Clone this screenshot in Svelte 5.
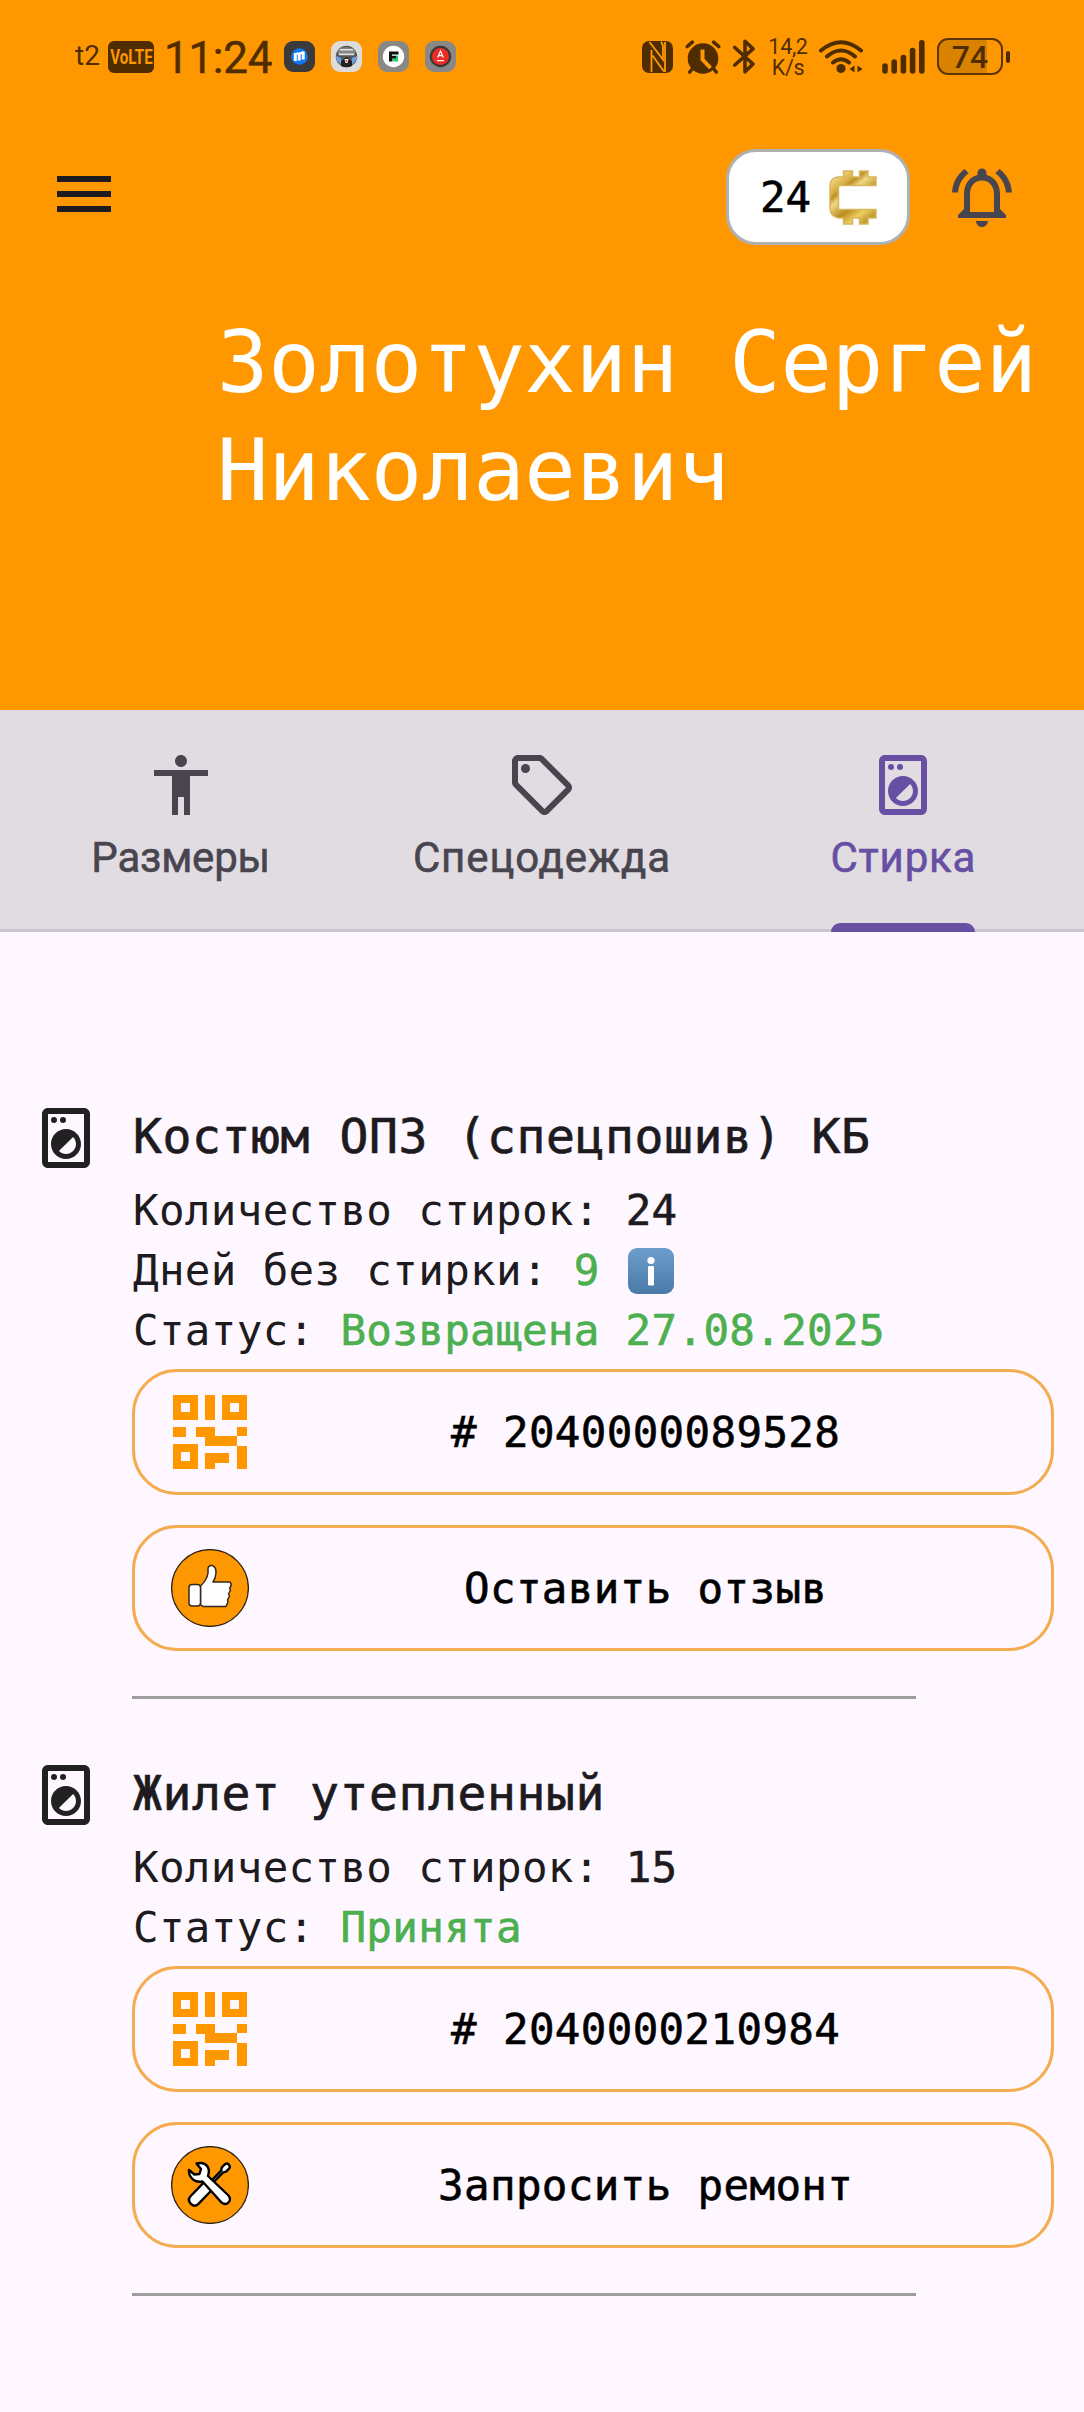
<script>
  const tabs = [
    { label: 'Размеры', icon: 'person', cls: 'sizes' },
    { label: 'Спецодежда', icon: 'tag', cls: 'wear' },
    { label: 'Стирка', icon: 'laundry', cls: 'wash', active: true }
  ];
  const items = [
    {
      title: 'Костюм ОПЗ (спецпошив) КБ',
      washes: 24,
      days: 9,
      status: 'Возвращена 27.08.2025',
      code: '2040000089528',
      action: 'Оставить отзыв',
      icon: 'like'
    },
    {
      title: 'Жилет утепленный',
      washes: 15,
      status: 'Принята',
      code: '2040000210984',
      action: 'Запросить ремонт',
      icon: 'tools'
    }
  ];
</script>

{#snippet laundry()}
  <svg class="icon" viewBox="0 0 24 24">
    <path d="M18 2.01L6 2c-1.11 0-2 .89-2 2v16c0 1.11.89 2 2 2h12c1.11 0 2-.89 2-2V4c0-1.11-.89-1.99-2-1.99zM18 20H6V4h12v16z" />
    <circle cx="8" cy="6" r="1" /><circle cx="11" cy="6" r="1" />
    <path d="M12 19c2.76 0 5-2.24 5-5s-2.24-5-5-5-5 2.24-5 5 2.24 5 5 5zm2.36-7.36c1.3 1.3 1.3 3.42 0 4.72-1.3 1.3-3.42 1.3-4.72 0l4.72-4.72z" />
  </svg>
{/snippet}

<div class="screen">
  <header>
    <div class="status">
      <span class="carrier">t2</span>
      <span class="volte"><span>VoLTE</span></span>
      <span class="clock">11:24</span>
      <svg class="app" viewBox="0 0 31 31">
        <rect width="31" height="31" rx="9" fill="#3a3a3a" />
        <circle cx="15.5" cy="15.5" r="8.3" fill="#0d78f2" />
        <path d="M11.3 12v8M15.2 11.5v8M19.2 10.5v8" stroke="#fff" stroke-width="3" />
        <path d="M11 12.500l3-1.500v3zM15 12l4-2v4z" fill="#fff" />
      </svg>
      <svg class="app" viewBox="0 0 31 31">
        <rect width="31" height="31" rx="9" fill="#dedcda" />
        <circle cx="15.5" cy="15.5" r="10.7" fill="#555" />
        <path d="M7 8.5Q15 4 24 8.5V14H7z" fill="#858585" />
        <path d="M9 8.7h13M8 13.4h15" stroke="#e0e0e0" stroke-width="1.6" />
        <path d="M5 15l5 2 2 7.5Q4.5 21 5 15zM26 15l-5 2-2 7.5Q26.5 21 26 15z" fill="#6f9fe0" />
        <path d="M10 20l5.5-4 5.5 4v5q-5.5 2.5-11 0z" fill="#222" />
        <path d="M13.5 18h4l-1 4h-2z" fill="#fff" /><rect x="14.7" y="19" width="1.6" height="2" fill="#e0542c" />
      </svg>
      <svg class="app" viewBox="0 0 31 31">
        <rect width="31" height="31" rx="9" fill="#898886" />
        <circle cx="15.5" cy="15.5" r="10.7" fill="#fff" />
        <path d="M14 14.5h6v6h-4.500z" fill="#1fce6b" />
        <path d="M11 20.5v-10h9.500v2.900H14v1.600h4v2.300h-3.500v3.200z" fill="#111" />
      </svg>
      <svg class="app" viewBox="0 0 31 31">
        <rect width="31" height="31" rx="9" fill="#898886" />
        <circle cx="15.5" cy="15.5" r="10.7" fill="#3c3836" />
        <circle cx="15.5" cy="15.5" r="8.5" fill="#ea2e26" />
        <path d="M12.7 16.5l2.800-6.500 2.800 6.500M13.5 14.700h4M12 19.700h7" stroke="#fff" stroke-width="1.200" fill="none" />
      </svg>

      <svg class="nfc" viewBox="0 0 31 32">
        <rect width="31" height="32" rx="7" fill="#4f2d00" />
        <path d="M7.5 1L21 18.500V6Q21 3 19 1M9.500 9V31M10.500 14.500L22 30.500M23 1V31" fill="none" stroke="#ff9800" stroke-width="1.800" />
      </svg>
      <svg class="alarm" viewBox="0 0 36 34">
        <g stroke="#4f2d00" stroke-width="3.6" stroke-linecap="round">
          <path d="M2.300 6.500l5-4.300M33.700 6.500l-5-4.300M8 28l-3.200 4M28 28l3.200 4" />
        </g>
        <circle cx="18" cy="18.5" r="15.3" fill="#4f2d00" />
        <path d="M17.5 9.500v10l8 8.500" fill="none" stroke="#ff9800" stroke-width="4" />
      </svg>
      <svg class="bt" viewBox="0 0 22 35">
        <path d="M1.800 8.500L20 25l-8 7.800V2.200L20 9.800 1.800 26" fill="none" stroke="#4f2d00" stroke-width="3.6" stroke-linecap="round" stroke-linejoin="round" />
      </svg>
      <span class="speed"><span>14,2</span><span>K/s</span></span>
      <svg class="wifi" viewBox="0 0 44 34">
        <g fill="none" stroke="#4f2d00" stroke-width="4" stroke-linecap="round">
          <path d="M2 10.500Q22-6 42 10.500M8 16.500Q22 4.500 36 16.500M14 22.500q8-6.500 16 0" />
        </g>
        <circle cx="22" cy="28.500" r="4.600" fill="#4f2d00" />
        <path d="M35.500 25.500v7l-5-3.500zM38.500 25.500v7l5-3.500z" fill="#4f2d00" />
      </svg>
      <svg class="signal" viewBox="0 0 43 34">
        <path d="M3 26v5M12.200 22v9M21.400 17.500V31M30.600 10.500V31M39.800 2.800V31" stroke="#4f2d00" stroke-width="5.600" stroke-linecap="round" />
      </svg>
      <span class="battery"><span>74</span></span>
      <span class="nub"></span>
    </div>

    <div class="bar">
      <svg class="icon menu" viewBox="0 0 24 24"><path d="M3 18h18v-2H3v2zm0-5h18v-2H3v2zm0-7v2h18V6H3z" /></svg>
      <div class="coins">
        <span>24</span>
        <svg class="coin" viewBox="0 0 48 55">
          <defs>
            <linearGradient id="gold" x1="0" y1="0" x2="0.7" y2="1">
              <stop offset="0" stop-color="#e0b84a" /><stop offset=".15" stop-color="#efd27a" />
              <stop offset=".3" stop-color="#d9ae45" /><stop offset=".36" stop-color="#c08f2a" />
              <stop offset=".46" stop-color="#f0d885" /><stop offset=".68" stop-color="#b98a1e" />
              <stop offset=".85" stop-color="#ecd05c" /><stop offset="1" stop-color="#c49a35" />
            </linearGradient>
          </defs>
          <path d="M14.500 1h9v6h7V1h8.500v6h8v8.500H9.500v24H47v8.500h-8v6h-8.500v-6h-7v6h-9v-6H9Q1 46 1 38V16Q1 8 9 7h5.500z" fill="url(#gold)" stroke="#d8b75c" stroke-width="1.500" />
        </svg>
      </div>
      <svg class="icon bell" viewBox="0 0 24 24">
        <path d="M12 22c1.100 0 2-.9 2-2h-4c0 1.100.9 2 2 2zm6-6v-5c0-3.070-1.630-5.640-4.500-6.320V4c0-.83-.67-1.500-1.500-1.500s-1.500.67-1.500 1.500v.68C7.640 5.360 6 7.920 6 11v5l-2 2v1h16v-1l-2-2zm-2 1H8v-6c0-2.480 1.510-4.500 4-4.500s4 2.020 4 4.500v6zM7.580 4.080L6.150 2.650C3.750 4.480 2.170 7.300 2.030 10.500h2c.15-2.650 1.510-4.970 3.550-6.420zm12.390 6.420h2c-.15-3.200-1.730-6.020-4.120-7.850l-1.420 1.430c2.020 1.450 3.390 3.770 3.540 6.420z" />
      </svg>
    </div>

    <h1>Золотухин Сергей<br />Николаевич</h1>
  </header>

  <nav>
    {#each tabs as tab}
      <div class="tab {tab.cls}" class:active={tab.active}>
        {#if tab.icon === 'person'}
          <svg class="icon" viewBox="0 0 24 24"><path d="M12 2c1.100 0 2 .9 2 2s-.9 2-2 2-2-.9-2-2 .9-2 2-2zm9 7h-6v13h-2v-6h-2v6H9V9H3V7h18v2z" /></svg>
        {:else if tab.icon === 'tag'}
          <svg class="icon" viewBox="0 0 24 24">
            <path d="M21.410 11.410l-8.830-8.830c-.37-.37-.88-.58-1.410-.58H4c-1.100 0-2 .9-2 2v7.170c0 .53.21 1.040.59 1.410l8.830 8.830c.78.78 2.050.78 2.830 0l7.170-7.170c.78-.78.78-2.040-.01-2.830zM12.830 20L4 11.170V4h7.170L20 12.830 12.830 20z" />
            <circle cx="6.5" cy="6.5" r="1.5" />
          </svg>
        {:else}
          {@render laundry()}
        {/if}
        <span class="label">{tab.label}</span>
        {#if tab.active}<span class="indicator"></span>{/if}
      </div>
    {/each}
  </nav>

  <main>
    {#each items as item}
      <section>
        {@render laundry()}
        <div class="body">
          <h2>{item.title}</h2>
          <div class="lines">
            <p>Количество стирок: <b>{item.washes}</b></p>
            {#if item.days}
              <p>
                Дней без стирки: <b class="ok">{item.days}</b>
                <svg class="info" viewBox="0 0 46 46">
                  <defs>
                    <linearGradient id="blue" x1="0" y1="0" x2="0" y2="1">
                      <stop offset="0" stop-color="#6d9dcb" /><stop offset="1" stop-color="#4b7aa8" />
                    </linearGradient>
                  </defs>
                  <rect width="46" height="46" rx="9" fill="url(#blue)" />
                  <circle cx="23" cy="12.5" r="3.6" fill="#fff" />
                  <rect x="20" y="18" width="6" height="19.5" rx="1.3" fill="#fff" />
                </svg>
              </p>
            {/if}
            <p>Статус: <b class="ok">{item.status}</b></p>
          </div>
          <div class="button">
            <svg class="pic" viewBox="0 0 78 78">
              <g fill="none" stroke="#ff9800" stroke-width="8">
                <path d="M6 6h17v17H6zM55 6h17v17H55zM6 55h17v17H6z" />
              </g>
              <path fill="#ff9800" d="M34 2h10v25H34zM2 34h13v10H2zM25 34h19v9h22v10H34v-9h-9zM66 34h10v9H66zM66 53h10v23H66zM34 60h24v10H44v6H34z" />
            </svg>
            <span># {item.code}</span>
          </div>
          <div class="button">
            <svg class="pic" viewBox="0 0 78 78">
              <circle cx="39" cy="39" r="38.4" fill="#ff9800" stroke="#2b2218" stroke-width="1.3" />
              {#if item.icon === 'like'}
                <g fill="#fff" stroke="#33291e" stroke-width="1.5" stroke-linejoin="round">
                  <path d="M29.500 37Q36 31 37 24v-5q1-3 4-2.500 4 1 4 7 0 5-3 9.500h17q2 2 .5 5l-1 1 1 2-2 4 1 2-2 4 .5 2-2 4.500H32l-2.500-2z" />
                  <rect x="18" y="35.500" width="11.500" height="21.500" rx="3" />
                </g>
              {:else}
                <g transform="translate(39 38)" fill="#fff" stroke="#000" stroke-width="2.4" stroke-linejoin="round">
                  <g transform="rotate(44)">
                    <path d="M-1.300-2V-17.500L-3-20v-4q0-3 3-3t3 3v4l-1.700 2.500V-2z" />
                    <path d="M-5.500 1Q-5.500-1.500-3-1.500H3Q5.500-1.500 5.500 1V22q0 5.500-5.500 5.500T-5.500 22z" />
                  </g>
                  <path d="M-13.500-20.500q7.500-2 11 3 2.500 4 .5 9.500L18.500 11.500q3 4 0 7t-7 0L-7.500-2.500q-7 1-10.500-3-3.500-4-3-8.500l5.500 4.500 5-.5 1.500-5z" />
                </g>
              {/if}
            </svg>
            <span>{item.action}</span>
          </div>
          <hr />
        </div>
      </section>
    {/each}
  </main>
</div>

<style>
  :global(body) { margin: 0; background: #fef7ff; }
  .screen {
    width: 1084px;
    height: 2412px;
    overflow: hidden;
    background: #fef7ff;
    color: #1d1b20;
    font-family: "DejaVu Sans Mono", monospace;
  }
  svg { flex: none; display: block; }
  .icon { width: 72px; height: 72px; fill: currentColor; }

  header { display: flow-root; height: 710px; background: #ff9800; }
  .status {
    display: flex;
    align-items: center;
    height: 113px;
    padding-left: 75px;
    font-family: Roboto, sans-serif;
    color: #4f2d00;
    white-space: nowrap;
  }
  .carrier { width: 33px; font-size: 28px; line-height: 28px; margin-top: -2px; }
  .volte {
    display: flex;
    align-items: center;
    justify-content: center;
    width: 46px;
    height: 32px;
    border-radius: 6px;
    background: #4f2d00;
    color: #ff9800;
    font-size: 21px;
    font-weight: 700;
  }
  .volte span { transform: scaleX(0.72); }
  .clock {
    width: 120px;
    margin: 3px 0 0 10px;
    font-size: 44px;
    letter-spacing: -0.3px;
    -webkit-text-stroke: 0.5px currentColor;
  }
  .app { width: 31px; height: 31px; margin-right: 16px; }
  .nfc { width: 31px; height: 32px; margin-left: 170px; }
  .alarm { width: 36px; height: 34px; margin-left: 12px; }
  .bt { width: 22px; height: 35px; margin-left: 12px; }
  .speed {
    display: flex;
    flex-direction: column;
    align-items: center;
    width: 40px;
    margin-left: 13px;
    font-size: 21.5px;
    line-height: 21px;
    letter-spacing: -0.3px;
  }
  .wifi { width: 44px; height: 34px; margin-left: 11px; }
  .signal { width: 43px; height: 34px; margin-left: 19px; }
  .battery {
    box-sizing: border-box;
    display: flex;
    align-items: center;
    justify-content: center;
    width: 66px;
    height: 37px;
    margin-left: 12px;
    border: 2.5px solid #5c3500;
    border-radius: 11px;
    background: linear-gradient(90deg, #d98200 78%, #ff9800 78%);
    font-size: 32px;
    font-weight: 500;
    line-height: 32px;
  }
  .nub { width: 4px; height: 12px; margin-left: 3px; border-radius: 2px; background: #4f2d00; }

  .bar { display: flex; align-items: center; height: 96px; padding: 0 66px 0 48px; margin-top: 36px; }
  .menu { margin-top: -6px; color: #1d1b20; }
  .coins {
    box-sizing: border-box;
    display: flex;
    align-items: center;
    justify-content: space-between;
    width: 184px;
    height: 96px;
    margin-left: auto;
    padding: 0 30px 0 31px;
    border: 3px solid #b0b0b0;
    border-radius: 30px;
    background: #fff;
    color: #000;
    font-size: 42.5px;
    -webkit-text-stroke: 0.6px #000;
  }
  .coin { width: 48px; height: 55px; }
  .bell { margin-left: 36px; color: #49454f; }
  h1 {
    margin: 64px 0 0 217px;
    color: #fff;
    font-size: 85.5px;
    font-weight: 400;
    line-height: 108px;
    letter-spacing: -0.25px;
    white-space: nowrap;
  }

  nav { display: flex; height: 222px; background: #e1dce2; box-shadow: inset 0 -3px #cac4d0; }
  .tab {
    flex: 1;
    display: flex;
    flex-direction: column;
    align-items: center;
    padding-top: 39px;
    color: #49454f;
    font-family: Roboto, sans-serif;
    font-size: 42px;
    line-height: 48px;
  }
  .active { color: #6750a4; }
  .label { margin-top: 13px; -webkit-text-stroke: 0.6px currentColor; }
  .sizes .label { letter-spacing: -0.2px; }
  .wear .label { letter-spacing: 0.9px; }
  .wash .label { letter-spacing: 0.8px; }
  .indicator { width: 144px; height: 9px; margin-top: auto; border-radius: 9px 9px 0 0; background: #6750a4; }

  main { padding: 168px 30px 0; }
  section { display: flex; gap: 30px; margin-bottom: 58px; }
  section > :global(.icon) { margin-top: 2px; color: #212121; }
  .body { flex: 1; }
  h2 {
    margin: 0 0 0 1px;
    font-size: 48px;
    font-weight: 400;
    line-height: 72px;
    letter-spacing: 0.6px;
    -webkit-text-stroke: 0.7px currentColor;
    white-space: nowrap;
  }
  .lines { margin: 9px 0 8px 1px; font-size: 42.5px; line-height: 60px; letter-spacing: 0.34px; }
  p { display: flex; align-items: center; height: 60px; margin: 0; white-space: pre; }
  b { font-weight: 400; -webkit-text-stroke: 0.6px currentColor; }
  .ok { color: #4caf50; }
  .info { width: 46px; height: 46px; margin: -1px 0 0 28px; }
  .button {
    box-sizing: border-box;
    display: flex;
    align-items: center;
    gap: 26px;
    height: 126px;
    margin-bottom: 30px;
    padding: 0 35px 0 37px;
    border: 3px solid #f5ac50;
    border-radius: 45px;
    color: #000;
    font-size: 42.5px;
    letter-spacing: 0.36px;
    -webkit-text-stroke: 0.6px #000;
  }
  .button span { flex: 1; text-align: center; }
  .pic { width: 78px; height: 78px; margin-left: -0.7px; }
  hr { width: 784px; height: 3px; margin: 45px 0 0; border: 0; background: #9e9e9e; }
</style>
